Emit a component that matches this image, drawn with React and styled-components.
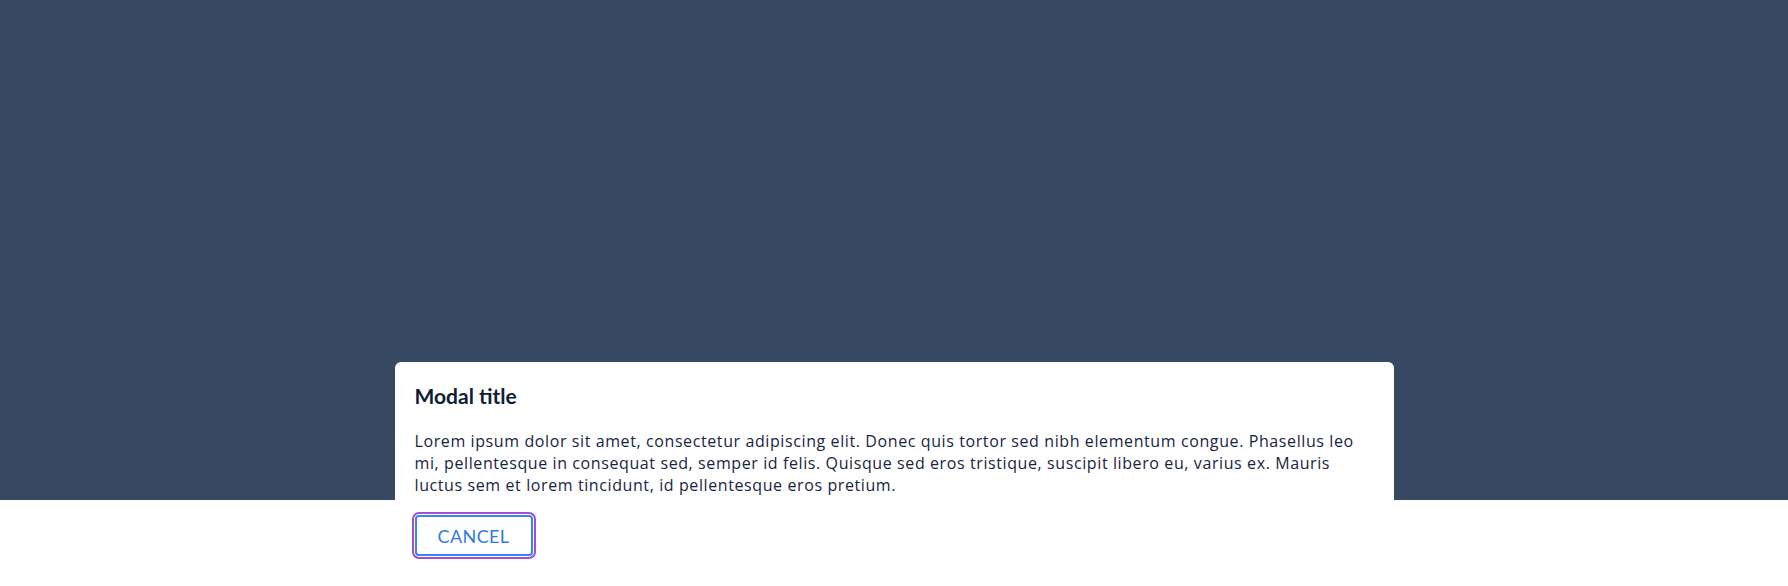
import React from 'react'
import styled, { createGlobalStyle } from 'styled-components'

const GlobalStyle = createGlobalStyle`
  html, body {
    margin: 0;
    padding: 0;
    background: #ffffff;
  }
  body {
    font-family: 'Open Sans', 'Liberation Sans', sans-serif;
  }
`
const Page = styled.div`
  position: relative;
  min-height: 586px;
  padding-top: 362px;
  box-sizing: border-box;
  display: flex;
  justify-content: center;
  align-items: flex-start;
`
const Backdrop = styled.div`
  position: absolute;
  top: 0;
  left: 0;
  right: 0;
  height: 500px;
  background-color: #374862;
`
const Modal = styled.section`
  position: relative;
  width: 999px;
  box-sizing: border-box;
  padding: 20px 20px 24px;
  background-color: #ffffff;
  border-radius: 6px;
`
const Title = styled.h2`
  margin: 0 0 20px;
  font-family: Lato, 'Open Sans', sans-serif;
  font-size: 21px;
  line-height: 28px;
  font-weight: 700;
  color: #0f1d36;
`
const Text = styled.p`
  margin: 0 0 19px;
  font-size: 16px;
  line-height: 22px;
  letter-spacing: 0.6px;
  color: #18253f;
`
const Actions = styled.div`
  display: flex;
  gap: 12px;
`
const Button = styled.button`
  height: 41px;
  padding: 0 21px;
  border: 2px solid #3b82f6;
  border-radius: 4px;
  background: #ffffff;
  font-family: Lato, 'Open Sans', sans-serif;
  font-size: 18px;
  letter-spacing: 0.4px;
  text-transform: uppercase;
  color: #2f7be6;
  outline: ${(props) => (props.$focused ? '2px solid #a04fd0' : 'none')};
  outline-offset: 1px;
  cursor: pointer;
`
export default function App() {
  return (
    <>
      <GlobalStyle />
      <Page>
        <Backdrop />
        <Modal>
          <Title>Modal title</Title>
          <Text>
            Lorem ipsum dolor sit amet, consectetur adipiscing elit. Donec quis
            tortor sed nibh elementum congue. Phasellus leo mi, pellentesque in
            consequat sed, semper id felis. Quisque sed eros tristique, suscipit
            libero eu, varius ex. Mauris luctus sem et lorem tincidunt, id
            pellentesque eros pretium.
          </Text>
          <Actions>
            <Button $focused>Cancel</Button>
          </Actions>
        </Modal>
      </Page>
    </>
  )
}
